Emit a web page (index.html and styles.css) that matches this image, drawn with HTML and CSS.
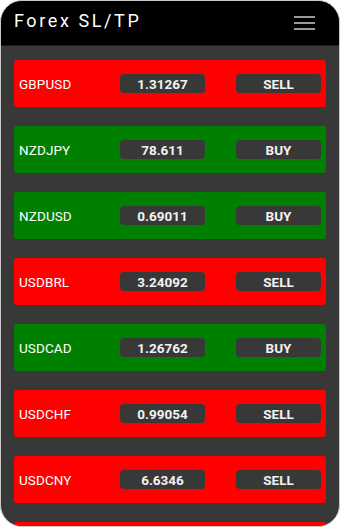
FILE: index.html
```html
<!DOCTYPE html>
<html>
<head>
<meta charset="utf-8">
<link rel="stylesheet" href="styles.css">
</head>
<body>
<div class="device">
  <header class="topbar">
    <h1 class="title">Forex SL/TP</h1>
    <button class="menu" aria-label="menu">
      <svg width="22" height="16" viewBox="0 0 22 16">
        <rect x="0" y="1" width="21" height="2" fill="#9a9a9a"/>
        <rect x="0" y="7" width="21" height="2" fill="#9a9a9a"/>
        <rect x="0" y="13" width="21" height="2" fill="#9a9a9a"/>
      </svg>
    </button>
  </header>
  <main class="list">
    <div class="card sell"><span class="pair">GBPUSD</span><span class="pill price">1.31267</span><span class="pill action">SELL</span></div>
    <div class="card buy"><span class="pair">NZDJPY</span><span class="pill price">78.611</span><span class="pill action">BUY</span></div>
    <div class="card buy"><span class="pair">NZDUSD</span><span class="pill price">0.69011</span><span class="pill action">BUY</span></div>
    <div class="card sell"><span class="pair">USDBRL</span><span class="pill price">3.24092</span><span class="pill action">SELL</span></div>
    <div class="card buy"><span class="pair">USDCAD</span><span class="pill price">1.26762</span><span class="pill action">BUY</span></div>
    <div class="card sell"><span class="pair">USDCHF</span><span class="pill price">0.99054</span><span class="pill action">SELL</span></div>
    <div class="card sell"><span class="pair">USDCNY</span><span class="pill price">6.6346</span><span class="pill action">SELL</span></div>
    <div class="card sell" aria-hidden="true"></div>
  </main>
</div>
</body>
</html>
```

FILE: styles.css
```css
* { box-sizing: border-box; }
html, body { margin: 0; padding: 0; background: #ffffff; }
body { font-family: Roboto, "Liberation Sans", sans-serif; }

.device {
  width: 340px;
  height: 527px;
  border: 1px solid #c8c8c8;
  border-radius: 22px;
  overflow: hidden;
  background: #383838;
}

.topbar {
  height: 45px;
  background: #000000;
  border-bottom: 1px solid #1c1c1c;
  display: flex;
  align-items: center;
  justify-content: space-between;
  padding: 0 23px 0 13px;
}

.title {
  margin: 0;
  color: #ffffff;
  font-family: Roboto, sans-serif;
  font-weight: 400;
  font-size: 18px;
  letter-spacing: 2.6px;
  line-height: 1;
  padding-bottom: 4px;
}

.menu {
  border: 0;
  background: transparent;
  padding: 0;
  display: flex;
  margin-bottom: 1px;
}

.list {
  display: flex;
  flex-direction: column;
  gap: 19px;
  padding: 14px 13px 0 13px;
}

.card {
  flex: 0 0 auto;
  height: 47px;
  border-radius: 3px;
  display: flex;
  align-items: center;
  padding: 0 5px;
  color: #ffffff;
}
.card.sell { background: #ff0000; }
.card.buy { background: #008000; }

.pair {
  flex: 1;
  font-size: 13.5px;
  letter-spacing: 0.1px;
}

.pill {
  width: 85px;
  height: 19px;
  border-radius: 4px;
  background: #383838;
  display: flex;
  align-items: center;
  justify-content: center;
  font-size: 13.5px;
  font-weight: 700;
  color: #f2f2f2;
}
.pill.price { margin-right: 31px; }
```
